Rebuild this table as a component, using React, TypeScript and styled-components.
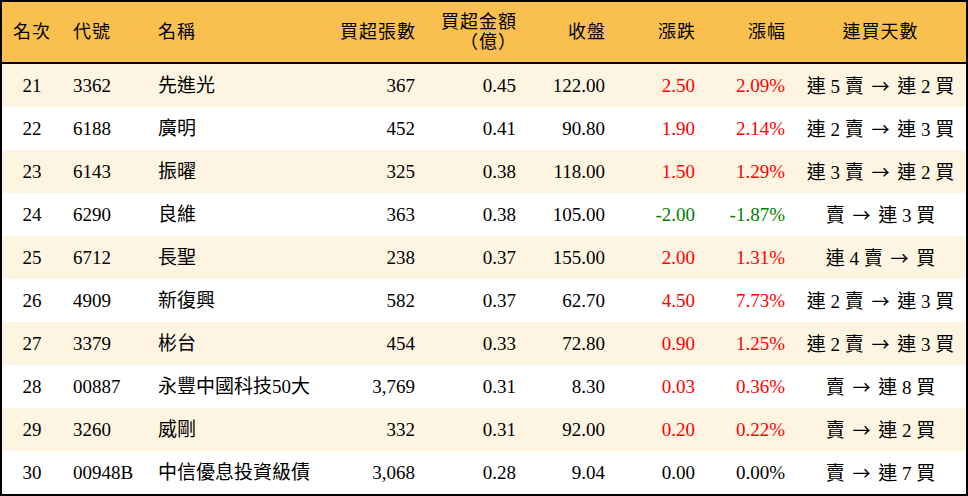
import * as React from 'react';
import styled, { createGlobalStyle } from 'styled-components';

const GlobalStyle = createGlobalStyle`
    html, body {
        margin: 0;
        padding: 0;
        background: #ffffff;
    }
    body {
        font-family: "Liberation Serif", "Noto Sans CJK TC", serif;
        color: #000;
    }
`;

const COLUMNS = '60px 86px 182px 95px 101px 89px 90px 90px 171px';

const Board = styled.div`
    width: 968px;
    box-sizing: border-box;
    border: 2px solid #000;
`;

const HeaderRow = styled.div`
    display: grid;
    grid-template-columns: ${COLUMNS};
    height: 60px;
    align-items: center;
    background: #f9c050;
    border-bottom: 2px solid #000;
    font-size: 18px;
    letter-spacing: 1px;
`;

const Row = styled.div<{ $odd: boolean }>`
    display: grid;
    grid-template-columns: ${COLUMNS};
    height: 43px;
    align-items: center;
    background: ${(p) => (p.$odd ? '#fdf5e2' : '#ffffff')};
    font-size: 19px;
`;

type Align = 'left' | 'right' | 'center';

const Cell = styled.div<{ $align: Align; $color?: string }>`
    text-align: ${(p) => p.$align};
    padding-left: ${(p) => (p.$align === 'left' ? '11px' : '0')};
    padding-right: ${(p) => (p.$align === 'right' ? '10px' : '0')};
    color: ${(p) => p.$color || '#000'};
    white-space: nowrap;
    line-height: 20px;
`;

const HeadCell = styled(Cell)`
    margin-right: ${(p) => (p.$align === 'right' ? '-1px' : '0')};
`;

const NameCell = styled(Cell)`
    padding-left: 10px;
`;

const Arrow = styled.span`
    font-family: "Noto Sans CJK JP", "DejaVu Sans", sans-serif;
    font-size: 18px;
    margin: 0 3px;
`;

interface Item {
    rank: number;
    code: string;
    name: string;
    lots: string;
    amount: string;
    close: string;
    change: string;
    pct: string;
    from: string;
    to: string;
}

const items: Item[] = [
    { rank: 21, code: '3362', name: '先進光', lots: '367', amount: '0.45', close: '122.00', change: '2.50', pct: '2.09%', from: '連 5 賣', to: '連 2 買' },
    { rank: 22, code: '6188', name: '廣明', lots: '452', amount: '0.41', close: '90.80', change: '1.90', pct: '2.14%', from: '連 2 賣', to: '連 3 買' },
    { rank: 23, code: '6143', name: '振曜', lots: '325', amount: '0.38', close: '118.00', change: '1.50', pct: '1.29%', from: '連 3 賣', to: '連 2 買' },
    { rank: 24, code: '6290', name: '良維', lots: '363', amount: '0.38', close: '105.00', change: '-2.00', pct: '-1.87%', from: '賣', to: '連 3 買' },
    { rank: 25, code: '6712', name: '長聖', lots: '238', amount: '0.37', close: '155.00', change: '2.00', pct: '1.31%', from: '連 4 賣', to: '買' },
    { rank: 26, code: '4909', name: '新復興', lots: '582', amount: '0.37', close: '62.70', change: '4.50', pct: '7.73%', from: '連 2 賣', to: '連 3 買' },
    { rank: 27, code: '3379', name: '彬台', lots: '454', amount: '0.33', close: '72.80', change: '0.90', pct: '1.25%', from: '連 2 賣', to: '連 3 買' },
    { rank: 28, code: '00887', name: '永豐中國科技50大', lots: '3,769', amount: '0.31', close: '8.30', change: '0.03', pct: '0.36%', from: '賣', to: '連 8 買' },
    { rank: 29, code: '3260', name: '威剛', lots: '332', amount: '0.31', close: '92.00', change: '0.20', pct: '0.22%', from: '賣', to: '連 2 買' },
    { rank: 30, code: '00948B', name: '中信優息投資級債', lots: '3,068', amount: '0.28', close: '9.04', change: '0.00', pct: '0.00%', from: '賣', to: '連 7 買' },
];

// 漲紅跌綠，平盤黑
function trendColor(change: string): string {
    const v = parseFloat(change);
    if (v > 0) return '#ff0000';
    if (v < 0) return '#008000';
    return '#000';
}

export default function App() {
    return (
        <>
            <GlobalStyle />
            <Board>
                <HeaderRow>
                    <HeadCell $align="center">名次</HeadCell>
                    <HeadCell $align="left">代號</HeadCell>
                    <HeadCell $align="left" style={{ paddingLeft: 10 }}>名稱</HeadCell>
                    <HeadCell $align="right">買超張數</HeadCell>
                    <HeadCell $align="right">
                        買超金額
                        <br />
                        （億）
                    </HeadCell>
                    <HeadCell $align="right">收盤</HeadCell>
                    <HeadCell $align="right">漲跌</HeadCell>
                    <HeadCell $align="right">漲幅</HeadCell>
                    <HeadCell $align="center">連買天數</HeadCell>
                </HeaderRow>
                {items.map((it, i) => {
                    const color = trendColor(it.change);
                    return (
                        <Row key={it.rank} $odd={i % 2 === 0}>
                            <Cell $align="center">{it.rank}</Cell>
                            <Cell $align="left">{it.code}</Cell>
                            <NameCell $align="left">{it.name}</NameCell>
                            <Cell $align="right">{it.lots}</Cell>
                            <Cell $align="right">{it.amount}</Cell>
                            <Cell $align="right">{it.close}</Cell>
                            <Cell $align="right" $color={color}>{it.change}</Cell>
                            <Cell $align="right" $color={color}>{it.pct}</Cell>
                            <Cell $align="center">
                                {it.from} <Arrow>→</Arrow> {it.to}
                            </Cell>
                        </Row>
                    );
                })}
            </Board>
        </>
    );
}
